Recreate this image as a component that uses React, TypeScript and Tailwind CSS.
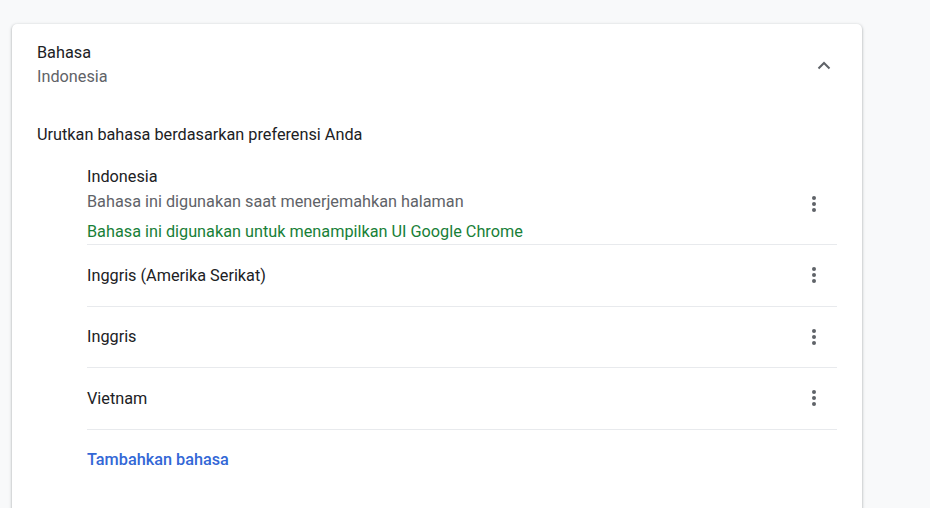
import { useState } from 'react';

const languages = [
  { name: 'Indonesia', primary: true },
  { name: 'Inggris (Amerika Serikat)' },
  { name: 'Inggris' },
  { name: 'Vietnam' },
];

function KebabIcon() {
  return (
    <svg width="4" height="16" viewBox="0 0 4 16" className="fill-[#5f6368]">
      <circle cx="2" cy="2" r="2" />
      <circle cx="2" cy="8" r="2" />
      <circle cx="2" cy="14" r="2" />
    </svg>
  );
}

export default function App() {
  const [open, setOpen] = useState(true);

  return (
    <div className="min-h-screen bg-[#f8f9fa] pl-3 pt-6 font-['Roboto',sans-serif] text-[16.25px] text-[#202124]">
      <div className="w-[850px] rounded-[5px] bg-white pb-6 shadow-[0_1px_2px_rgba(60,64,67,0.3),0_1px_3px_1px_rgba(60,64,67,0.15)]">
        {/* 헤더 */}
        <button
          onClick={() => setOpen(!open)}
          className="flex w-full items-center justify-between pl-[25px] pr-[31px] pt-[17px] pb-4 text-left"
        >
          <div className="flex flex-col">
            <span className="leading-6">Bahasa</span>
            <span className="leading-6 text-[#5f6368]">Indonesia</span>
          </div>
          <svg width="14" height="9" viewBox="0 0 14 9" className={open ? '' : 'rotate-180'}>
            <path d="M1.5 7.5 7 2l5.5 5.5" fill="none" stroke="#5f6368" strokeWidth="2" />
          </svg>
        </button>

        {open && (
          <div className="flex flex-col">
            <div className="pl-[25px] pt-[17px] leading-[25px]">Urutkan bahasa berdasarkan preferensi Anda</div>
            <div className="ml-[75px] mr-[25px] mt-[17px] flex flex-col">
              {languages.map((lang) => (
                <div
                  key={lang.name}
                  className={`flex items-center justify-between border-b border-[#e8eaed] ${
                    lang.primary ? '' : 'h-[61.5px]'
                  }`}
                >
                  {lang.primary ? (
                    <div className="flex flex-col">
                      <span className="leading-[25px]">{lang.name}</span>
                      <span className="leading-[25px] text-[#5f6368]">Bahasa ini digunakan saat menerjemahkan halaman</span>
                      <span className="mt-[5px] leading-[25px] text-[#188038]">
                        Bahasa ini digunakan untuk menampilkan UI Google Chrome
                      </span>
                    </div>
                  ) : (
                    <span className="leading-[25px]">{lang.name}</span>
                  )}
                  <button className="mr-[3px] flex h-10 w-10 items-center justify-center">
                    <KebabIcon />
                  </button>
                </div>
              ))}
              <div className="flex h-[61.5px] items-center">
                <button className="font-medium text-[#3367d6]">Tambahkan bahasa</button>
              </div>
            </div>
          </div>
        )}
      </div>
    </div>
  );
}
